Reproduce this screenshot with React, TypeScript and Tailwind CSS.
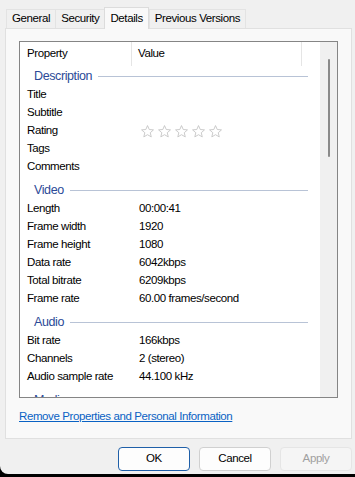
const font = { fontFamily: '"Liberation Sans", Arial, sans-serif' };

type Row = { label: string; value?: string; stars?: boolean };

const groups: { title: string; rows: Row[] }[] = [
  {
    title: "Description",
    rows: [
      { label: "Title" },
      { label: "Subtitle" },
      { label: "Rating", stars: true },
      { label: "Tags" },
      { label: "Comments" },
    ],
  },
  {
    title: "Video",
    rows: [
      { label: "Length", value: "00:00:41" },
      { label: "Frame width", value: "1920" },
      { label: "Frame height", value: "1080" },
      { label: "Data rate", value: "6042kbps" },
      { label: "Total bitrate", value: "6209kbps" },
      { label: "Frame rate", value: "60.00 frames/second" },
    ],
  },
  {
    title: "Audio",
    rows: [
      { label: "Bit rate", value: "166kbps" },
      { label: "Channels", value: "2 (stereo)" },
      { label: "Audio sample rate", value: "44.100 kHz" },
    ],
  },
  { title: "Media", rows: [] },
];

function Star() {
  return (
    <svg width="15" height="15" viewBox="0 0 24 24" className="shrink-0">
      <path
        d="M12 2.5l2.8 6.3 6.8.6-5.2 4.5 1.6 6.7L12 17.1l-5.9 3.5 1.6-6.7-5.2-4.5 6.8-.6z"
        fill="none"
        stroke="#c4c4c4"
        strokeWidth="1.4"
        strokeLinejoin="round"
      />
    </svg>
  );
}

function Tab({ label, active }: { label: string; active?: boolean }) {
  if (active) {
    return (
      <div className="h-[22px] -mb-px px-[5px] flex items-center bg-[#f9f9f9] border border-b-0 border-[#dcdcdc] text-black z-10">
        {label}
      </div>
    );
  }
  return (
    <div className="h-[19px] mt-[3px] px-[5px] flex items-center bg-[#f0f0f0] border border-b-0 border-[#e3e3e3] -mr-px text-black">
      {label}
    </div>
  );
}

export default function App() {
  return (
    <div className="w-[355px] h-[477px] bg-black overflow-hidden text-[11.5px] tracking-[-0.4px]" style={font}>
      <div className="h-[474px] bg-[#f0f0f0] rounded-bl-[8px] flex flex-col">
        <div className="flex items-end pl-[6px] pt-[6px]">
          <Tab label="General" />
          <Tab label="Security" />
          <Tab label="Details" active />
          <Tab label="Previous Versions" />
        </div>

        <div className="mx-[5px] mr-[3px] h-[411px] bg-[#f9f9f9] border border-[#e0e0e0] px-[13px] pt-[12px]">
          <div className="h-[357px] border border-[#858585] bg-white flex">
            <div className="flex-1 overflow-hidden">
              <div className="h-[20px] flex items-center text-black">
                <div className="w-[112px] pl-[7px] h-[24px] flex items-center border-r border-[#e5e5e5] self-start">
                  Property
                </div>
                <div className="w-[170px] pl-[6px] h-[24px] flex items-center border-r border-[#e5e5e5] self-start">
                  Value
                </div>
              </div>
              {groups.map((g) => (
                <div key={g.title}>
                  <div className="h-[24px] pt-[4px] flex items-center pl-[14px] pr-[12px]">
                    <span className="text-[#2b4a97] text-[12.5px] pr-[6px]">{g.title}</span>
                    <div className="flex-1 h-px bg-[#b8c3d6]" />
                  </div>
                  {g.rows.map((r) => (
                    <div key={r.label} className="h-[18px] flex items-center text-black">
                      <div className="w-[119px] pl-[7px]">{r.label}</div>
                      {r.stars ? (
                        <div className="flex gap-[2px] pl-[1px]">
                          <Star />
                          <Star />
                          <Star />
                          <Star />
                          <Star />
                        </div>
                      ) : (
                        <div>{r.value}</div>
                      )}
                    </div>
                  ))}
                </div>
              ))}
            </div>
            <div className="w-[17px] bg-[#f0f0f0] flex justify-center pt-[17px]">
              <div className="w-[2px] h-[98px] bg-[#8a8a8a] rounded-full" />
            </div>
          </div>

          <div className="mt-[10px]">
            <span className="text-[#0a62c4] underline">Remove Properties and Personal Information</span>
          </div>
        </div>

        <div className="flex justify-end gap-[9px] pr-[3px] pt-[8px]">
          <button className="w-[72px] h-[24px] rounded-[4px] bg-[#fdfdfd] border border-[#1f5fa8] text-black">
            OK
          </button>
          <button className="w-[72px] h-[24px] rounded-[4px] bg-[#fdfdfd] border border-[#d0d0d0] text-black">
            Cancel
          </button>
          <button className="w-[72px] h-[24px] rounded-[4px] bg-[#f5f5f5] border border-[#e5e5e5] text-[#a0a0a0]">
            Apply
          </button>
        </div>
      </div>
    </div>
  );
}
